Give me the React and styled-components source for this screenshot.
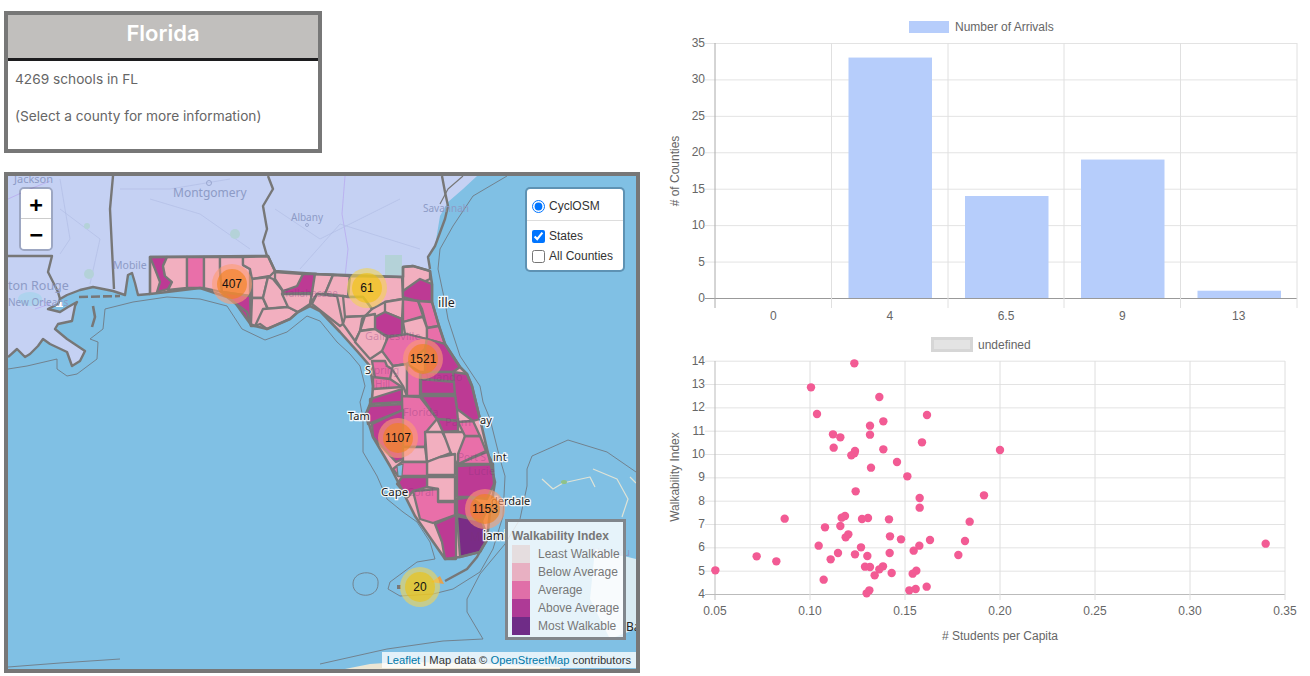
import React from 'react';
import styled, { createGlobalStyle } from 'styled-components';

const Global = createGlobalStyle`
  html, body { margin: 0; padding: 0; background: #fff; }
  body { font-family: "Liberation Sans", Arial, sans-serif; }
`;

const Page = styled.div`
  display: flex;
  width: 1310px;
  height: 676px;
  overflow: hidden;
`;
const LeftColumn = styled.div`
  width: 660px;
  padding: 11px 0 0 4px;
  box-sizing: border-box;
  display: flex;
  flex-direction: column;
  gap: 19px;
`;
const RightColumn = styled.div`
  width: 650px;
  display: flex;
  flex-direction: column;
`;

/* info box */
const InfoBox = styled.section`
  width: 318px;
  height: 142px;
  box-sizing: border-box;
  border: 4px solid #777;
`;
const InfoHeader = styled.h1`
  margin: 0;
  height: 46px;
  box-sizing: border-box;
  background: #c1bfbd;
  border-bottom: 3px solid #1c1c1e;
  color: #fff;
  font: 600 22px/36px Inter, "Liberation Sans", sans-serif;
  text-align: center;
`;
const InfoBody = styled.div`
  padding: 10px 7px;
  color: #666;
  font: 400 13.7px/17px Inter, "Liberation Sans", sans-serif;
`;
const InfoLine = styled.p`
  margin: 0 0 20px;
`;

/* map */
const MapFrame = styled.div`
  position: relative;
  width: 636px;
  height: 501px;
  box-sizing: border-box;
  border: 4px solid #777;
  overflow: hidden;
  background: #80c0e4;
`;
const MapArt = styled.svg`
  display: block;
  width: 628px;
  height: 493px;
`;
const PlaceLabel = styled.text`
  font-family: "Noto Sans", sans-serif;
  font-size: ${p => p.$size || 11}px;
  fill: ${p => p.$dark ? '#222' : p.$faint ? 'rgba(125,50,120,.32)' : '#8d9bc6'};
  ${p => p.$halo ? 'paint-order: stroke; stroke: rgba(255,255,255,.9); stroke-width: 2.5px;' : ''}
`;
const ClusterRing = styled.div`
  position: absolute;
  left: ${p => p.$x - 28}px;
  top: ${p => p.$y - 196}px;
  width: 40px;
  height: 40px;
  border-radius: 50%;
  display: flex;
  align-items: center;
  justify-content: center;
  background: ${p => p.$large ? 'rgba(253,156,115,.6)' : 'rgba(241,211,87,.6)'};
`;
const ClusterCore = styled.div`
  width: 30px;
  height: 30px;
  border-radius: 50%;
  display: flex;
  align-items: center;
  justify-content: center;
  background: ${p => p.$large ? 'rgba(241,128,23,.6)' : 'rgba(240,194,12,.6)'};
  color: #111;
  font: 12px "Liberation Sans", sans-serif;
`;
const ZoomControl = styled.div`
  position: absolute;
  left: 11px;
  top: 11px;
  border: 2px solid rgba(0,0,0,.2);
  border-radius: 5px;
  background-clip: padding-box;
`;
const ZoomButton = styled.div`
  width: 30px;
  height: 30px;
  box-sizing: border-box;
  padding-top: 2px;
  background: #fff;
  color: #000;
  display: flex;
  align-items: center;
  justify-content: center;
  font: bold 22px/28px "DejaVu Sans Mono", monospace;
  ${p => p.$first ? 'border-bottom: 1px solid #ccc; border-radius: 3px 3px 0 0;' : 'border-radius: 0 0 3px 3px;'}
`;
const LayerControl = styled.form`
  position: absolute;
  right: 11px;
  top: 11px;
  width: 100px;
  height: 85px;
  box-sizing: border-box;
  border: 2px solid rgba(60,100,130,.5);
  border-radius: 5px;
  background: #fff;
  background-clip: padding-box;
  padding: 7px 6px 0 5px;
  font: 12px/20px "Liberation Sans", sans-serif;
  color: #333;
`;
const LayerRow = styled.label`
  display: flex;
  align-items: center;
  gap: 4px;
  height: 20px;
`;
const LayerRule = styled.div`
  height: 1px;
  background: #ddd;
  margin: 4px -6px 5px -5px;
`;
const LayerInput = styled.input`
  margin: 0;
  width: 13px;
  height: 13px;
`;
const Legend = styled.aside`
  position: absolute;
  left: 497px;
  top: 343px;
  width: 121px;
  height: 121px;
  box-sizing: border-box;
  border: 3px solid #80868c;
  background: rgba(255,255,255,.8);
  padding: 7px 0 0 4px;
  color: #777;
  font: 12px/18px "Liberation Sans", sans-serif;
`;
const LegendTitle = styled.div`
  font-weight: bold;
  height: 16px;
  line-height: 14px;
`;
const LegendRow = styled.div`
  display: flex;
  height: 18px;
  gap: 8px;
  white-space: nowrap;
`;
const LegendSwatch = styled.i`
  display: block;
  width: 18px;
  height: 18px;
  background: ${p => p.$color};
`;
const Attribution = styled.div`
  position: absolute;
  right: 0;
  bottom: 1px;
  height: 16px;
  padding: 0 5px;
  background: rgba(255,255,255,.78);
  color: #333;
  font: 11.2px/16px "Liberation Sans", sans-serif;
`;
const AttrLink = styled.a`
  color: #0078a8;
`;

/* charts */
const ChartSvg = styled.svg`
  display: block;
  width: 650px;
  height: ${p => p.$h}px;
  flex: none;
`;
const ChartText = styled.text`
  font-family: "Liberation Sans", Arial, sans-serif;
  font-size: 12px;
  fill: #666;
`;

const L = '#f2afbf', M = '#e96fa9', D = '#bd3a94', X = '#7a2c86';

const counties = [
  [D, '150,258 167,258 163,267 165,277 172,283 168,290 157,293 160,283 155,270'],
  [L, '167,258 187,258 187,289 168,291 172,283 165,277 163,267'],
  [M, '187,258 204,258 204,289 187,289'],
  [L, '204,258 220,258 220,272 222,293 204,289'],
  [L, '220,258 243,258 243,266 250,270 250,297 222,293 220,272'],
  [D, '222,293 250,297 251,326 236,305'],
  [L, '243,258 268,257 275,272 270,277 252,280 250,270 243,266'],
  [L, '252,280 268,278 263,299 252,299'],
  [L, '252,299 263,299 268,311 267,314 255,327 251,325'],
  [L, '268,278 273,280 282,291 288,308 268,310 263,299'],
  [D, '303,275 315,275 312,294 282,295 283,292 297,287'],
  [L, '275,273 303,275 297,287 283,292 275,280'],
  [L, '263,310 288,308 298,313 290,320 267,330 260,325 255,327'],
  [L, '282,295 312,295 310,305 298,313 288,308'],
  [L, '315,275 333,276 325,295 317,295 310,305 312,294'],
  [L, '333,276 350,277 348,298 343,297 325,295'],
  [L, '317,295 337,297 343,325 340,327 312,305'],
  [L, '350,277 402,278 403,300 385,303 372,310 363,298 348,298'],
  [L, '403,268 413,267 430,272 430,280 403,292'],
  [D, '403,292 420,280 432,285 432,303 418,302 403,298'],
  [M, '403,300 418,302 423,317 403,323'],
  [M, '418,302 432,303 439,327 427,329 422,310'],
  [L, '403,323 423,318 427,329 427,340 405,335'],
  [M, '427,329 439,327 445,345 427,340'],
  [L, '385,303 403,300 402,320 385,313'],
  [D, '375,318 385,313 402,320 402,337 388,337 383,335 375,330'],
  [L, '343,297 348,298 363,298 372,310 365,317 345,318'],
  [L, '345,318 365,317 362,320 360,332 355,342 343,325'],
  [L, '365,317 375,315 375,330 360,332'],
  [L, '360,332 375,330 387,338 385,350 370,360 355,343'],
  [M, '388,338 407,335 427,340 425,350 407,365 393,367 382,352'],
  [D, '427,340 445,345 460,368 453,373 433,373 425,375 425,350'],
  [M, '372,362 385,362 387,367 392,370 390,380 375,380'],
  [L, '393,367 407,365 407,397 403,387 392,370'],
  [M, '373,378 390,380 402,388 373,390'],
  [M, '407,365 420,373 420,397 407,397'],
  [D, '420,373 433,373 453,373 455,383 421,380'],
  [D, '421,380 455,383 455,395 421,395'],
  [D, '453,373 467,375 472,387 480,420 473,422 457,410 455,395'],
  [D, '421,397 455,397 457,410 458,422 437,420'],
  [D, '370,400 402,390 402,403 370,405'],
  [D, '370,407 402,405 403,411 368,425 366,415'],
  [M, '402,397 420,398 437,420 426,433 425,448 403,448'],
  [D, '372,425 403,411 403,448 403,460 396,463 373,438'],
  [L, '403,448 425,448 427,463 403,463'],
  [L, '425,433 442,433 453,453 440,458 427,463'],
  [L, '443,433 465,433 465,453 457,465 450,452'],
  [L, '427,463 440,458 455,455 455,476 427,476'],
  [L, '427,478 455,478 455,502 438,502 438,490 427,488'],
  [M, '402,463 427,463 427,477 398,477 393,470'],
  [D, '402,478 427,478 427,488 413,492 408,498 397,485'],
  [M, '413,492 438,490 438,503 455,503 455,516 433,524 420,520'],
  [D, '435,525 456,516 456,560 445,560 442,543'],
  [X, '457,517 482,522 488,540 480,553 460,558'],
  [D, '457,500 470,498 487,510 482,522 457,515'],
  [D, '457,467 493,465 494,485 487,500 470,498 457,498'],
  [M, '458,465 487,453 493,465'],
  [M, '465,437 480,437 486,452 458,465 458,455'],
  [M, '458,423 473,422 480,437 465,437'],
  [D, '437,420 458,422 458,432 443,433'],
];

const gulfCoast = 'M8,358 17,350 25,358 30,355 38,347 43,340 50,345 67,353 72,367 80,362 85,352 67,340 55,330 58,325 72,322 75,307 77,303 68,308 60,313 48,310 58,305 60,300 67,296 80,291 93,288 113,292 125,296 128,276 132,274 135,284 138,296 150,295';

const landPath = `M8,177 L477,177 463,190 448,203 440,217 435,247 428,258 430,270 403,268 403,278 275,272 268,257 150,258 150,295 ${gulfCoast.slice(1).split(' ').reverse().join(' ')} Z`;

const floridaOutline = `M403,268 413,267 430,272 432,285 432,303 439,327 445,345 460,368 467,375 472,387 480,420 487,450 495,483 490,513 487,540 480,553 460,558 445,560 443,557 415,517 400,487 390,467 373,438 366,415 372,400 373,387 370,367 357,352 340,333 320,312 310,307 298,313 290,320 267,330 255,327 251,327 247,313 227,298 200,289 167,293 150,295 150,258 268,257 275,272 317,275 403,278 Z`;

const MapPicture = () => (
  <MapArt viewBox="8 177 628 493">
    <rect x="8" y="177" width="628" height="493" fill="#80c0e4" />
    <path d={landPath} fill="#c5d1f3" />
    {/* rivers and roads */}
    <g fill="none" stroke="#b6a6ee" strokeWidth="0.8" opacity=".9">
      <path d="M345,177 342,215 348,250 345,278" />
      <path d="M8,200 30,190 50,182" />
      <path d="M30,298 50,305 35,310" />
    </g>
    <g fill="none" stroke="#aebbe2" strokeWidth="0.6">
      <path d="M60,210 100,240 90,285" />
      <path d="M150,200 200,215 250,250" />
      <path d="M120,190 170,190 230,180" />
      <path d="M275,210 320,240 400,200" />
      <path d="M300,270 340,225 420,250" />
      <path d="M60,180 70,240 60,255" />
    </g>
    <g fill="#b4d2d8">
      <ellipse cx="87" cy="227" rx="3" ry="3" />
      <ellipse cx="89" cy="275" rx="5" ry="5" />
      <ellipse cx="235" cy="235" rx="5" ry="5" />
      <ellipse cx="30" cy="300" rx="12" ry="7" fill="#aed3ee" />
      <rect x="385" y="256" width="17" height="20" />
    </g>
    <g fill="none" stroke="#99a6cf" strokeWidth="1">
      <circle cx="209" cy="184" r="2.5" />
      <circle cx="307" cy="226" r="1.5" />
    </g>
    <rect x="56" y="303" width="7" height="5" fill="#fff" />
    {/* maritime boundaries */}
    <g fill="none" stroke="#6f7b85" strokeWidth="0.9">
      <path d="M8,370 27,367 57,360 57,370 67,377 77,375 97,360 98,343 90,340 103,330 105,310 133,303 167,298 200,300 227,307 242,330 265,341 287,333 307,317 320,322 337,343 350,355 360,367 365,387 360,403 363,420 363,453 377,477 387,500 403,513 417,523 430,543 435,560 417,563 390,583 388,590 400,597 433,595 453,590 480,573 493,550 503,517 505,477 500,460 490,420 483,403 480,387 460,357 448,320 445,303 438,270 440,250 453,227 473,197 507,177" />
      <path d="M353,585 C353,570 380,570 378,585 C378,600 353,600 353,585 Z" />
      <path d="M636,473 607,453 568,441 532,457 527,470 527,487 520,520 505,545 480,575 467,600 467,613 483,640 443,642 387,650 320,665" />
      <path d="M8,668 60,664 120,660" />
    </g>
    {/* Bahamas */}
    <g fill="none" stroke="#dfe3d6" strokeWidth="1.2" strokeLinejoin="round">
      <path d="M542,480 553,490 563,484 590,478 595,488" />
      <path d="M593,470 617,480 628,500 622,518" />
      <path d="M630,478 636,484" />
    </g>
    <path d="M595,550 636,560 636,630 610,640 590,600 Z" fill="#d9ebf2" />
    <ellipse cx="564" cy="483" rx="3" ry="2" fill="#8fc28a" />
    {/* Cuba */}
    <path d="M345,670 370,665 400,663 470,664 560,668 560,670 Z" fill="#ece6d4" />
    {/* state lines and shore */}
    <g fill="none" stroke="#777" strokeWidth="2.4" strokeLinejoin="round">
      <path d="M113,177 110,210 114,290" />
      <path d="M8,257 52,257 48,273 58,293 60,300" />
      <path d="M268,177 273,190 263,207 267,230 263,243 267,257" />
      <path d="M442,177 445,193 448,207 445,220 435,247 428,258 430,270" />
      <path d={gulfCoast} />
      <path d="M463,177 448,190 440,205" strokeWidth="1.2" />
      <path d="M79,298 120,297" strokeDasharray="9 3" strokeWidth="2.6" />
      <path d="M93,307 95,318 92,328" strokeWidth="2.6" />
    </g>
    <path d={floridaOutline} fill={L} />
    {counties.map(([fill, pts], i) => (
      <polygon key={i} points={pts} fill={fill} stroke="#777" strokeWidth="2.3" strokeLinejoin="round" />
    ))}
    <path d={floridaOutline} fill="none" stroke="#777" strokeWidth="2.6" strokeLinejoin="round" />
    <path d="M397,467 403,465 402,477 398,477 Z" fill="#80c0e4" stroke="#777" strokeWidth="1.2" />
    {/* keys */}
    <path d="M445,582 467,570 477,558 483,547" fill="none" stroke="#777" strokeWidth="2.4" />
    <path d="M431,583 440,577 444,585" fill="#e6a34e" />
    <rect x="397" y="586" width="4" height="4" fill="#777" />
    {/* faint labels printed under the county fill */}
    <PlaceLabel x="365" y="341" $size={11} $faint>Gainesville</PlaceLabel>
    <PlaceLabel x="374" y="375" $size={10} $faint>pring</PlaceLabel>
    <PlaceLabel x="375" y="389" $size={10} $faint>Hill</PlaceLabel>
    <PlaceLabel x="420" y="382" $size={11} $faint>Orlando</PlaceLabel>
    <PlaceLabel x="403" y="417" $size={11} $faint>Florida</PlaceLabel>
    <PlaceLabel x="445" y="427" $size={11} $faint>Palm</PlaceLabel>
    <PlaceLabel x="458" y="462" $size={10} $faint>Port S</PlaceLabel>
    <PlaceLabel x="468" y="476" $size={11} $faint>Lucie</PlaceLabel>
    <PlaceLabel x="407" y="497" $size={11} $faint>Coral</PlaceLabel>
    <PlaceLabel x="470" y="542" $size={12} $faint>M</PlaceLabel>
    <PlaceLabel x="284" y="298" $size={10} $faint>Tallahassee</PlaceLabel>
    {/* place names */}
    <PlaceLabel x="14" y="184" $size={11}>Jackson</PlaceLabel>
    <PlaceLabel x="173" y="198" $size={12}>Montgomery</PlaceLabel>
    <PlaceLabel x="291" y="222" $size={10}>Albany</PlaceLabel>
    <PlaceLabel x="423" y="213" $size={10}>Savannah</PlaceLabel>
    <PlaceLabel x="113" y="270" $size={10.5}>Mobile</PlaceLabel>
    <PlaceLabel x="8" y="291" $size={12.5}>ton Rouge</PlaceLabel>
    <PlaceLabel x="8" y="307" $size={10}>New Orleans</PlaceLabel>
    <PlaceLabel x="438" y="308" $size={12.5} $dark $halo>ille</PlaceLabel>
    <PlaceLabel x="365" y="375" $size={11} $dark $halo>S</PlaceLabel>
    <PlaceLabel x="348" y="421" $size={11} $dark $halo>Tam</PlaceLabel>
    <PlaceLabel x="381" y="497" $size={11.5} $dark $halo>Cape</PlaceLabel>
    <PlaceLabel x="491" y="506" $size={11} $dark $halo>derdale</PlaceLabel>
    <PlaceLabel x="483" y="541" $size={12} $dark $halo>iami</PlaceLabel>
    <PlaceLabel x="493" y="462" $size={11} $dark $halo>int</PlaceLabel>
    <PlaceLabel x="480" y="425" $size={11} $dark $halo>ay</PlaceLabel>
    <PlaceLabel x="626" y="632" $size={12} $dark>Ba</PlaceLabel>
    <PlaceLabel x="592" y="557" $size={11}>Nassau</PlaceLabel>
  </MapArt>
);

const clusters = [
  { x: 232, y: 284, n: 407, large: true },
  { x: 367, y: 288, n: 61 },
  { x: 423, y: 359, n: 1521, large: true },
  { x: 398, y: 438, n: 1107, large: true },
  { x: 485, y: 509, n: 1153, large: true },
  { x: 420, y: 587, n: 20 },
];

const legendItems = [
  ['#e5dddf', 'Least Walkable'],
  ['#e8b0c2', 'Below Average'],
  ['#e06fa8', 'Average'],
  ['#ae3a96', 'Above Average'],
  ['#6f2c87', 'Most Walkable'],
];

const barGrid = [715, 831.5, 948, 1064, 1180.5, 1297];
const barLabels = ['0', '4', '6.5', '9', '13'];
const barValues = [0, 33, 14, 19, 1];
const yOf = v => 298 - v * 7.286;

const BarChart = () => (
  <ChartSvg $h={330} viewBox="660 0 650 330">
    <rect x="909" y="21" width="40" height="12" fill="#b6cdfb" />
    <ChartText x="955" y="31">Number of Arrivals</ChartText>
    {[0, 5, 10, 15, 20, 25, 30, 35].map(v => (
      <g key={v}>
        <line x1="705" x2="1297" y1={yOf(v) + .5} y2={yOf(v) + .5} stroke={v ? '#e3e3e3' : '#999'} />
        <ChartText x="705" y={yOf(v) + 4} textAnchor="end">{v}</ChartText>
      </g>
    ))}
    {barGrid.map((x, i) => (
      <line key={x} x1={x} x2={x} y1="43" y2="308" stroke={i ? '#e0e0e0' : '#aaa'} />
    ))}
    {barValues.map((v, i) => (
      <rect key={i} x={barGrid[i] + 17} width="83.5" y={yOf(v)} height={v * 7.286} fill="#b6cdfb" />
    ))}
    {barLabels.map((t, i) => (
      <ChartText key={t} x={(barGrid[i] + barGrid[i + 1]) / 2} y="320" textAnchor="middle">{t}</ChartText>
    ))}
    <ChartText transform="translate(679,171) rotate(-90)" textAnchor="middle">
      # of Counties
    </ChartText>
  </ChartSvg>
);

const points = [[583,100],[453,172],[658,201],[801,255],[471,252],[670,274],[630,287],[519,313],[541,322],[630,314],[786,337],[521,353],[585,363],[583,370],[574,376],[670,358],[711,396],[633,413],[742,439],[587,484],[779,504],[972,496],[779,533],[374,566],[545,563],[555,558],[624,564],[606,567],[687,568],[929,575],[495,592],[541,588],[565,613],[557,622],[690,619],[723,628],[810,630],[915,633],[476,647],[603,652],[778,647],[761,662],[534,669],[689,669],[585,673],[622,678],[895,675],[290,679],[349,694],[512,688],[615,710],[630,711],[669,709],[658,718],[769,722],[758,731],[695,729],[644,736],[166,721],[491,749],[800,770],[767,777],[748,781],[628,781],[620,790],[1020,360],[1817,641]];
const xTicks = [['0.05', 715], ['0.10', 810], ['0.15', 905], ['0.20', 1000], ['0.25', 1095], ['0.30', 1190], ['0.35', 1285]];
const yTicks = [14, 13, 12, 11, 10, 9, 8, 7, 6, 5, 4];
const sy = v => 594 - (v - 4) * 23.33;

const ScatterChart = () => (
  <ChartSvg $h={316} viewBox="660 330 650 316">
    <rect x="932.5" y="338.5" width="39" height="12" fill="#e3e3e3" stroke="#d6d6d6" strokeWidth="3" />
    <ChartText x="978" y="349">undefined</ChartText>
    {yTicks.map(v => (
      <g key={v}>
        <line x1="705" x2="1285" y1={sy(v) + .5} y2={sy(v) + .5} stroke={v === 4 ? '#bbb' : '#e3e3e3'} />
        <ChartText x="705" y={sy(v) + 4} textAnchor="end">{v}</ChartText>
      </g>
    ))}
    {xTicks.map(([t, x], i) => (
      <g key={t}>
        <line x1={x} x2={x} y1="361" y2="600" stroke={i ? '#dedede' : '#bbb'} />
        <ChartText x={x} y="615" textAnchor="middle">{t}</ChartText>
      </g>
    ))}
    {points.map(([x, y], i) => (
      <circle key={i} cx={660 + x / 3} cy={330 + y / 3} r="4.2" fill="#f25b94" />
    ))}
    <ChartText x="1000" y="640" textAnchor="middle"># Students per Capita</ChartText>
    <ChartText transform="translate(679,477) rotate(-90)" textAnchor="middle">
      Walkability Index
    </ChartText>
  </ChartSvg>
);

export default function App() {
  return (
    <Page>
      <Global />
      <LeftColumn>
        <InfoBox>
          <InfoHeader>Florida</InfoHeader>
          <InfoBody>
            <InfoLine>4269 schools in FL</InfoLine>
            <InfoLine>(Select a county for more information)</InfoLine>
          </InfoBody>
        </InfoBox>
        <MapFrame>
          <MapPicture />
          {clusters.map(c => (
            <ClusterRing key={c.n} $x={c.x} $y={c.y} $large={c.large}>
              <ClusterCore $large={c.large}>{c.n}</ClusterCore>
            </ClusterRing>
          ))}
          <ZoomControl>
            <ZoomButton $first>+</ZoomButton>
            <ZoomButton>−</ZoomButton>
          </ZoomControl>
          <LayerControl>
            <LayerRow>
              <LayerInput type="radio" defaultChecked name="base" />
              CyclOSM
            </LayerRow>
            <LayerRule />
            <LayerRow>
              <LayerInput type="checkbox" defaultChecked />
              States
            </LayerRow>
            <LayerRow>
              <LayerInput type="checkbox" />
              All Counties
            </LayerRow>
          </LayerControl>
          <Legend>
            <LegendTitle>Walkability Index</LegendTitle>
            {legendItems.map(([c, t]) => (
              <LegendRow key={t}>
                <LegendSwatch $color={c} />
                {t}
              </LegendRow>
            ))}
          </Legend>
          <Attribution>
            <AttrLink>Leaflet</AttrLink> | Map data © <AttrLink>OpenStreetMap</AttrLink> contributors
          </Attribution>
        </MapFrame>
      </LeftColumn>
      <RightColumn>
        <BarChart />
        <ScatterChart />
      </RightColumn>
    </Page>
  );
}
